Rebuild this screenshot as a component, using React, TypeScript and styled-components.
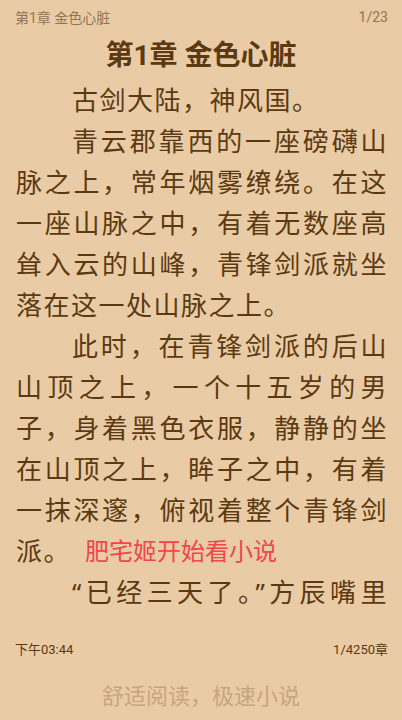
import React from 'react';
import styled, { createGlobalStyle } from 'styled-components';

const GlobalStyle = createGlobalStyle`
  html, body {
    margin: 0;
    padding: 0;
    background: #e9cba5;
  }
  * {
    box-sizing: border-box;
  }
`;

const Page = styled.div`
  display: flex;
  flex-direction: column;
  width: 402px;
  height: 720px;
  background: #e9cba5;
  font-family: 'Noto Sans CJK SC', 'Noto Sans', sans-serif;
  overflow: hidden;
`;

const StatusBar = styled.div<{ height: number }>`
  display: flex;
  align-items: center;
  justify-content: space-between;
  height: ${props => props.height}px;
  padding: 0 14px 0 15px;
  font-family: Roboto, 'Noto Sans CJK SC', sans-serif;
`;

const HeaderText = styled.span`
  font-size: 14px;
  color: #8f7658;
`;

const FooterText = styled.span`
  font-size: 13px;
  color: #5b3a12;
`;

const ChapterTitle = styled.h1`
  margin: 0;
  height: 44px;
  line-height: 44px;
  text-align: center;
  font-family: Roboto, 'Noto Sans CJK SC', sans-serif;
  font-size: 28px;
  font-weight: 700;
  color: #5b3a12;
`;

const Body = styled.div`
  flex: 1;
  padding: 0 14px 0 16px;
  color: #5b3a12;
  font-family: 'Noto Sans', 'Noto Sans CJK SC', sans-serif;
  font-size: 26px;
`;

const Line = styled.div<{ indent?: boolean; justify?: boolean }>`
  display: flex;
  align-items: center;
  height: 41px;
  white-space: nowrap;
  letter-spacing: 1.5px;
  padding-left: ${props => (props.indent ? '56px' : '0')};
  text-align: ${props => (props.justify ? 'justify' : 'left')};
  text-align-last: ${props => (props.justify ? 'justify' : 'left')};
  text-justify: inter-character;
`;

const LineText = styled.span<{ full?: boolean }>`
  display: block;
  flex: ${props => (props.full ? '1' : '0 0 auto')};
`;

const AdText = styled.span`
  margin-left: 14px;
  font-family: 'Noto Sans CJK SC', sans-serif;
  font-size: 24px;
  letter-spacing: 0;
  color: #f0474a;
`;

const Slogan = styled.div`
  height: 52px;
  margin-top: 8px;
  display: flex;
  align-items: center;
  justify-content: center;
  font-size: 22px;
  color: #c7a67e;
`;

type LineData = { text: string; indent?: boolean; last?: boolean; ad?: string };

const lines: LineData[] = [
  { text: '古剑大陆，神风国。', indent: true, last: true },
  { text: '青云郡靠西的一座磅礴山', indent: true },
  { text: '脉之上，常年烟雾缭绕。在这' },
  { text: '一座山脉之中，有着无数座高' },
  { text: '耸入云的山峰，青锋剑派就坐' },
  { text: '落在这一处山脉之上。', last: true },
  { text: '此时，在青锋剑派的后山', indent: true },
  { text: '山顶之上，一个十五岁的男' },
  { text: '子，身着黑色衣服，静静的坐' },
  { text: '在山顶之上，眸子之中，有着' },
  { text: '一抹深邃，俯视着整个青锋剑' },
  { text: '派。', last: true, ad: '肥宅姬开始看小说' },
  { text: '“已经三天了。”方辰嘴里', indent: true },
];

export default function App() {
  return (
    <Page>
      <GlobalStyle />
      <StatusBar height={34}>
        <HeaderText>第1章 金色心脏</HeaderText>
        <HeaderText>1/23</HeaderText>
      </StatusBar>
      <ChapterTitle>第1章 金色心脏</ChapterTitle>
      <Body>
        {lines.map((line, i) => (
          <Line key={i} indent={line.indent} justify={!line.last}>
            <LineText full={!line.last}>{line.text}</LineText>
            {line.ad && <AdText>{line.ad}</AdText>}
          </Line>
        ))}
      </Body>
      <StatusBar height={24}>
        <FooterText>下午03:44</FooterText>
        <FooterText>1/4250章</FooterText>
      </StatusBar>
      <Slogan>舒适阅读，极速小说</Slogan>
    </Page>
  );
}
